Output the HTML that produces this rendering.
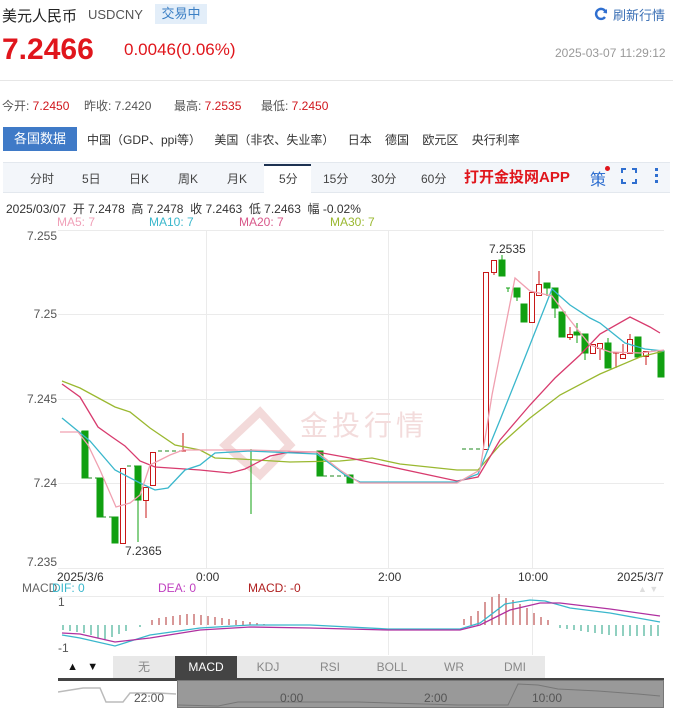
<!DOCTYPE html>
<html><head><meta charset="utf-8"><style>
*{margin:0;padding:0;box-sizing:border-box}
body{width:673px;height:710px;overflow:hidden;background:#fff;font-family:"Liberation Sans","Noto Sans CJK SC",sans-serif;color:#333;position:relative}
.a{position:absolute;white-space:nowrap}
</style></head><body>
<div class="a" style="left:2px;top:5px;font-size:15px;color:#222">美元人民币</div>
<div class="a" style="left:88px;top:7px;font-size:13px;color:#555">USDCNY</div>
<div class="a" style="left:155px;top:4px;width:52px;height:20px;background:#e3eef9;color:#3b7fc4;font-size:13px;line-height:20px;text-align:center">交易中</div>
<svg class="a" style="left:594px;top:7px" width="14" height="14" viewBox="0 0 14 14"><path d="M12 6A5 5 0 1 0 11 10" fill="none" stroke="#2f6fd0" stroke-width="2.4"/><path d="M9 5.5L13 6.5L13 2Z" fill="#2f6fd0"/></svg>
<div class="a" style="left:613px;top:5px;font-size:13px;color:#3a6fb5">刷新行情</div>
<div class="a" style="left:2px;top:33px;font-size:30px;font-weight:bold;color:#e0161c">7.2466</div>
<div class="a" style="left:124px;top:40px;font-size:17px;color:#e0161c">0.0046(0.06%)</div>
<div class="a" style="left:555px;top:46px;font-size:12px;color:#999">2025-03-07 11:29:12</div>
<div class="a" style="left:0;top:80px;width:673px;border-top:1px solid #e6e6e6"></div>
<div class="a" style="left:2px;top:97px;font-size:12px;color:#555">今开: <span style="color:#d0161c">7.2450</span></div>
<div class="a" style="left:84px;top:97px;font-size:12px;color:#555">昨收: 7.2420</div>
<div class="a" style="left:174px;top:97px;font-size:12px;color:#555">最高: <span style="color:#d0161c">7.2535</span></div>
<div class="a" style="left:261px;top:97px;font-size:12px;color:#555">最低: <span style="color:#d0161c">7.2450</span></div>
<div class="a" style="left:3px;top:127px;width:74px;height:24px;background:#3f7ac7;color:#fff;font-size:13px;line-height:24px;text-align:center">各国数据</div>
<div class="a" style="left:77px;top:127px;width:596px;height:24px;background:#fff"></div>
<div class="a" style="left:87px;top:131px;font-size:12px;color:#333">中国（GDP、ppi等）&nbsp;&nbsp;&nbsp;&nbsp;美国（非农、失业率）&nbsp;&nbsp;&nbsp;&nbsp;日本&nbsp;&nbsp;&nbsp;&nbsp;德国&nbsp;&nbsp;&nbsp;&nbsp;欧元区&nbsp;&nbsp;&nbsp;&nbsp;央行利率</div>
<div class="a" style="left:3px;top:162px;width:667px;height:31px;background:#f3f6fa;border-top:1px solid #e3e8ee;border-bottom:1px solid #e3e8ee"></div>
<div class="a" style="left:205px;top:164px;width:37px;height:30px;background:#fff;border-top:2px solid #1e3352;left:264px;width:47px"></div>
<div class="a" style="left:0;top:170px;font-size:12px;color:#444">
<span class="a" style="left:30px">分时</span><span class="a" style="left:82px">5日</span><span class="a" style="left:129px">日K</span><span class="a" style="left:178px">周K</span><span class="a" style="left:227px">月K</span><span class="a" style="left:279px">5分</span><span class="a" style="left:323px">15分</span><span class="a" style="left:371px">30分</span><span class="a" style="left:421px">60分</span></div>
<div class="a" style="left:464px;top:166px;font-size:15px;font-weight:bold;color:#e0161c">打开金投网APP</div>
<div class="a" style="left:590px;top:166px;font-size:16px;color:#2f6fd0">策</div>
<div class="a" style="left:605px;top:166px;width:5px;height:5px;border-radius:50%;background:#e0161c"></div>
<svg class="a" style="left:621px;top:168px" width="16" height="16"><path d="M1 5V1H5M11 1H15V5M15 11V15H11M5 15H1V11" fill="none" stroke="#2f6fd0" stroke-width="2"/></svg>
<div class="a" style="left:655px;top:168px;width:3px;height:3px;background:#2f6fd0;box-shadow:0 6px 0 #2f6fd0,0 12px 0 #2f6fd0"></div>
<div class="a" style="left:6px;top:200px;font-size:12px;color:#333">2025/03/07 &nbsp;开 7.2478 &nbsp;高 7.2478 &nbsp;收 7.2463 &nbsp;低 7.2463 &nbsp;幅 -0.02%</div>
<div class="a" style="left:57px;top:215px;font-size:12px;color:#f0a0b8">MA5: 7</div>
<div class="a" style="left:149px;top:215px;font-size:12px;color:#3ab7cc">MA10: 7</div>
<div class="a" style="left:239px;top:215px;font-size:12px;color:#d8588a">MA20: 7</div>
<div class="a" style="left:330px;top:215px;font-size:12px;color:#9ab830">MA30: 7</div>
<svg class="a" style="left:0;top:0" width="673" height="710" font-family="Liberation Sans" font-size="12">
<g stroke="#ebebeb" stroke-width="1">
<line x1="58" y1="230.5" x2="664" y2="230.5"/><line x1="58" y1="314.5" x2="664" y2="314.5"/><line x1="58" y1="399.5" x2="664" y2="399.5"/><line x1="58" y1="483.5" x2="664" y2="483.5"/><line x1="58" y1="568.5" x2="664" y2="568.5"/>
<line x1="206.5" y1="230" x2="206.5" y2="568"/><line x1="388.5" y1="230" x2="388.5" y2="568"/><line x1="532.5" y1="230" x2="532.5" y2="568"/>
<line x1="206.5" y1="596" x2="206.5" y2="655"/><line x1="388.5" y1="596" x2="388.5" y2="655"/><line x1="532.5" y1="596" x2="532.5" y2="655"/>
<line x1="58" y1="596.5" x2="664" y2="596.5"/>
</g>
<g fill="#555" text-anchor="end"><text x="57" y="240">7.255</text><text x="57" y="318">7.25</text><text x="57" y="403">7.245</text><text x="57" y="487">7.24</text><text x="57" y="566">7.235</text></g>
<text x="300" y="435" font-size="28" fill="#f3dcdc" font-family="Noto Sans CJK SC" letter-spacing="4">金投行情</text>
<path d="M225 445L260 412L290 445L260 475Z" fill="none" stroke="#f3dada" stroke-width="8"/>
<g stroke="#1f8a1f" stroke-dasharray="4,3" fill="none">
<path d="M60 432H82M88 478H97M102 517H112M127 466H135M158 451H183M183 450H251M323 476H353M373 483H457M462 449H483"/>
</g>
<g fill="#11a011" stroke="#11a011">
<rect x="82" y="431" width="6" height="47"/><rect x="97" y="478" width="6" height="39"/><rect x="112" y="517" width="6" height="26"/>
<line x1="138" y1="466" x2="138" y2="542"/><rect x="135" y="466" width="6" height="34"/>
<line x1="251" y1="449" x2="251" y2="514"/><rect x="317" y="451" width="6" height="25"/><rect x="347" y="475" width="6" height="8"/>
<line x1="502" y1="255" x2="502" y2="276"/><rect x="499" y="260" width="6" height="16"/>
<line x1="506" y1="288" x2="510" y2="288"/><line x1="508" y1="288" x2="508" y2="292"/>
<line x1="517" y1="288" x2="517" y2="301"/><rect x="514" y="288" width="6" height="9"/><rect x="521" y="304" width="6" height="18"/>
<line x1="547" y1="283" x2="547" y2="296"/><rect x="544" y="283" width="6" height="5"/>
<line x1="555" y1="288" x2="555" y2="318"/><rect x="552" y="288" width="6" height="20"/><rect x="559" y="312" width="6" height="25"/>
<line x1="577" y1="323" x2="577" y2="343"/><rect x="574" y="332" width="6" height="3"/>
<line x1="585" y1="334" x2="585" y2="360"/><rect x="582" y="334" width="6" height="19"/>
<line x1="608" y1="338" x2="608" y2="368"/><rect x="605" y="343" width="6" height="25"/>
<rect x="635" y="337" width="6" height="20"/><rect x="658" y="351" width="6" height="26"/>
</g>
<g fill="#fff" stroke="#c81818">
<rect x="120.5" y="468.5" width="5" height="75"/><line x1="146" y1="487" x2="146" y2="518"/><rect x="143.5" y="487.5" width="5" height="13"/>
<rect x="150.5" y="452.5" width="5" height="33"/><line x1="183" y1="433" x2="183" y2="451"/><line x1="180" y1="451" x2="186" y2="451"/>
<rect x="483.5" y="272.5" width="5" height="177"/><line x1="494" y1="260" x2="494" y2="275"/><rect x="491.5" y="260.5" width="5" height="12"/>
<rect x="529.5" y="292.5" width="5" height="30"/><line x1="539" y1="271" x2="539" y2="295"/><rect x="536.5" y="284.5" width="5" height="11"/>
<line x1="570" y1="327" x2="570" y2="340"/><rect x="567.5" y="334.5" width="5" height="3"/><rect x="590.5" y="344.5" width="5" height="9"/>
<line x1="600" y1="343" x2="600" y2="360"/><rect x="597.5" y="343.5" width="5" height="5"/><line x1="616" y1="353" x2="616" y2="368"/><line x1="613" y1="353" x2="619" y2="353"/>
<line x1="623" y1="344" x2="623" y2="358"/><rect x="620.5" y="354.5" width="5" height="4"/><line x1="630" y1="334" x2="630" y2="353"/><rect x="627.5" y="339.5" width="5" height="14"/>
<line x1="646" y1="351" x2="646" y2="365"/><rect x="643.5" y="351.5" width="5" height="5"/><line x1="651" y1="350" x2="656" y2="350"/>
</g>
<g fill="none" stroke-width="1.3">
<polyline stroke="#9ab830" points="62,381 80,388 115,407 130,412 150,428 175,445 200,450 215,458 240,459 290,462 340,461 372,458 400,464 457,470 478,470 500,445 530,418 560,395 600,374 640,357 664,351"/>
<polyline stroke="#d83b6e" points="62,384 80,397 98,427 112,437 125,446 140,461 155,467 200,470 230,473 245,469 270,456 290,452 317,452 350,458 457,481 478,477 500,440 530,405 555,378 580,355 600,334 630,317 650,327 660,333"/>
<polyline stroke="#3ab7cc" points="62,418 90,441 115,470 140,483 155,490 168,488 185,470 200,465 215,453 250,451 317,454 345,475 360,482 457,482 478,474 500,420 520,370 552,289 570,305 590,318 600,323 625,343 645,349 664,351"/>
<polyline stroke="#f0a0b0" points="60,432 78,432 88,445 100,470 116,507 130,503 140,495 150,465 170,455 183,450 250,450 317,452 340,470 360,483 457,483 480,470 492,395 515,278 530,291 552,296 570,320 590,345 610,352 640,353 664,350"/>
</g>
<text x="489" y="253" fill="#333">7.2535</text><text x="125" y="555" fill="#333">7.2365</text>
<g fill="#333"><text x="57" y="581">2025/3/6</text><text x="196" y="581">0:00</text><text x="378" y="581">2:00</text><text x="518" y="581">10:00</text><text x="617" y="581">2025/3/7</text></g>
<text x="22" y="592" fill="#666">MACD</text><text x="52" y="592" fill="#3ab7cc">DIF: 0</text><text x="158" y="592" fill="#c040c0">DEA: 0</text><text x="248" y="592" fill="#b02020">MACD: -0</text>
<text x="638" y="592" fill="#ddd" font-size="9">▲ ▼</text>
<text x="58" y="606" fill="#555">1</text><text x="58" y="652" fill="#555">-1</text>
<g stroke="#b03030" stroke-width="1"><path d="M152 620V625M159 618V625M166 617V625M173 616V625M180 615V625M187 614V625M194 614V625M201 615V625M208 616V625M215 617V625M222 618V625M229 619V625M236 620V625M243 621V625M250 622V625M257 623V625M264 624V625M464 619V625M471 616V625M478 611V625M485 602V625M492 597V625M499 594V625M506 598V625M513 600V625M520 604V625M527 608V625M534 613V625M541 617V625M548 620V625"/></g>
<g stroke="#20a080" stroke-width="1"><path d="M63 625V630M70 625V631M77 625V632M84 625V633M91 625V635M98 625V638M105 625V640M112 625V637M119 625V634M126 625V631M140 625V627M560 625V628M567 625V629M574 625V630M581 625V631M588 625V632M595 625V633M602 625V634M609 625V635M616 625V636M623 625V636M630 625V636M637 625V636M644 625V636M651 625V636M658 625V636"/></g>
<polyline fill="none" stroke="#3ab7cc" stroke-width="1.3" points="62,635 80,638 115,646 150,635 200,628 250,625 310,625 388,629 460,629 480,623 505,604 530,600 545,601 570,608 610,613 660,622"/>
<polyline fill="none" stroke="#b030a0" stroke-width="1.3" points="62,633 80,634 115,642 150,638 200,630 250,627 310,628 388,630 460,630 480,625 510,610 540,603 560,603 610,609 660,616"/>
</svg>
<div class="a" style="left:58px;top:656px;width:54px;height:22px;background:#fff;font-size:11px;line-height:22px;color:#111">&nbsp;&nbsp;&nbsp;▲&nbsp;&nbsp;&nbsp;▼</div>
<div class="a" style="left:113px;top:656px;width:432px;height:22px;background:#e8e8e8;font-size:12px;line-height:22px;color:#888;display:flex">
<div style="width:62px;text-align:center">无</div><div style="width:62px;text-align:center;background:#444;color:#fff">MACD</div><div style="width:62px;text-align:center">KDJ</div><div style="width:62px;text-align:center">RSI</div><div style="width:62px;text-align:center">BOLL</div><div style="width:62px;text-align:center">WR</div><div style="width:60px;text-align:center">DMI</div></div>
<div class="a" style="left:58px;top:678px;width:606px;height:3px;background:#444"></div>
<div class="a" style="left:177px;top:680px;width:487px;height:28px;background:#999;border:1px solid #777"></div>
<svg class="a" style="left:58px;top:680px" width="606" height="30" font-family="Liberation Sans" font-size="12">
<polyline fill="none" stroke="#bbb" stroke-width="1.5" points="0,12 25,8 42,8 48,22 65,22 72,13 100,13 118,14"/>
<polyline fill="none" stroke="#777" stroke-width="1" points="120,25 160,26 180,22 260,22 300,22 400,25 450,25 460,4 480,5 500,9 540,11 580,14 602,16"/>
<g fill="#555"><text x="76" y="22">22:00</text><text x="222" y="22">0:00</text><text x="366" y="22">2:00</text><text x="474" y="22">10:00</text></g>
</svg>
</body></html>
